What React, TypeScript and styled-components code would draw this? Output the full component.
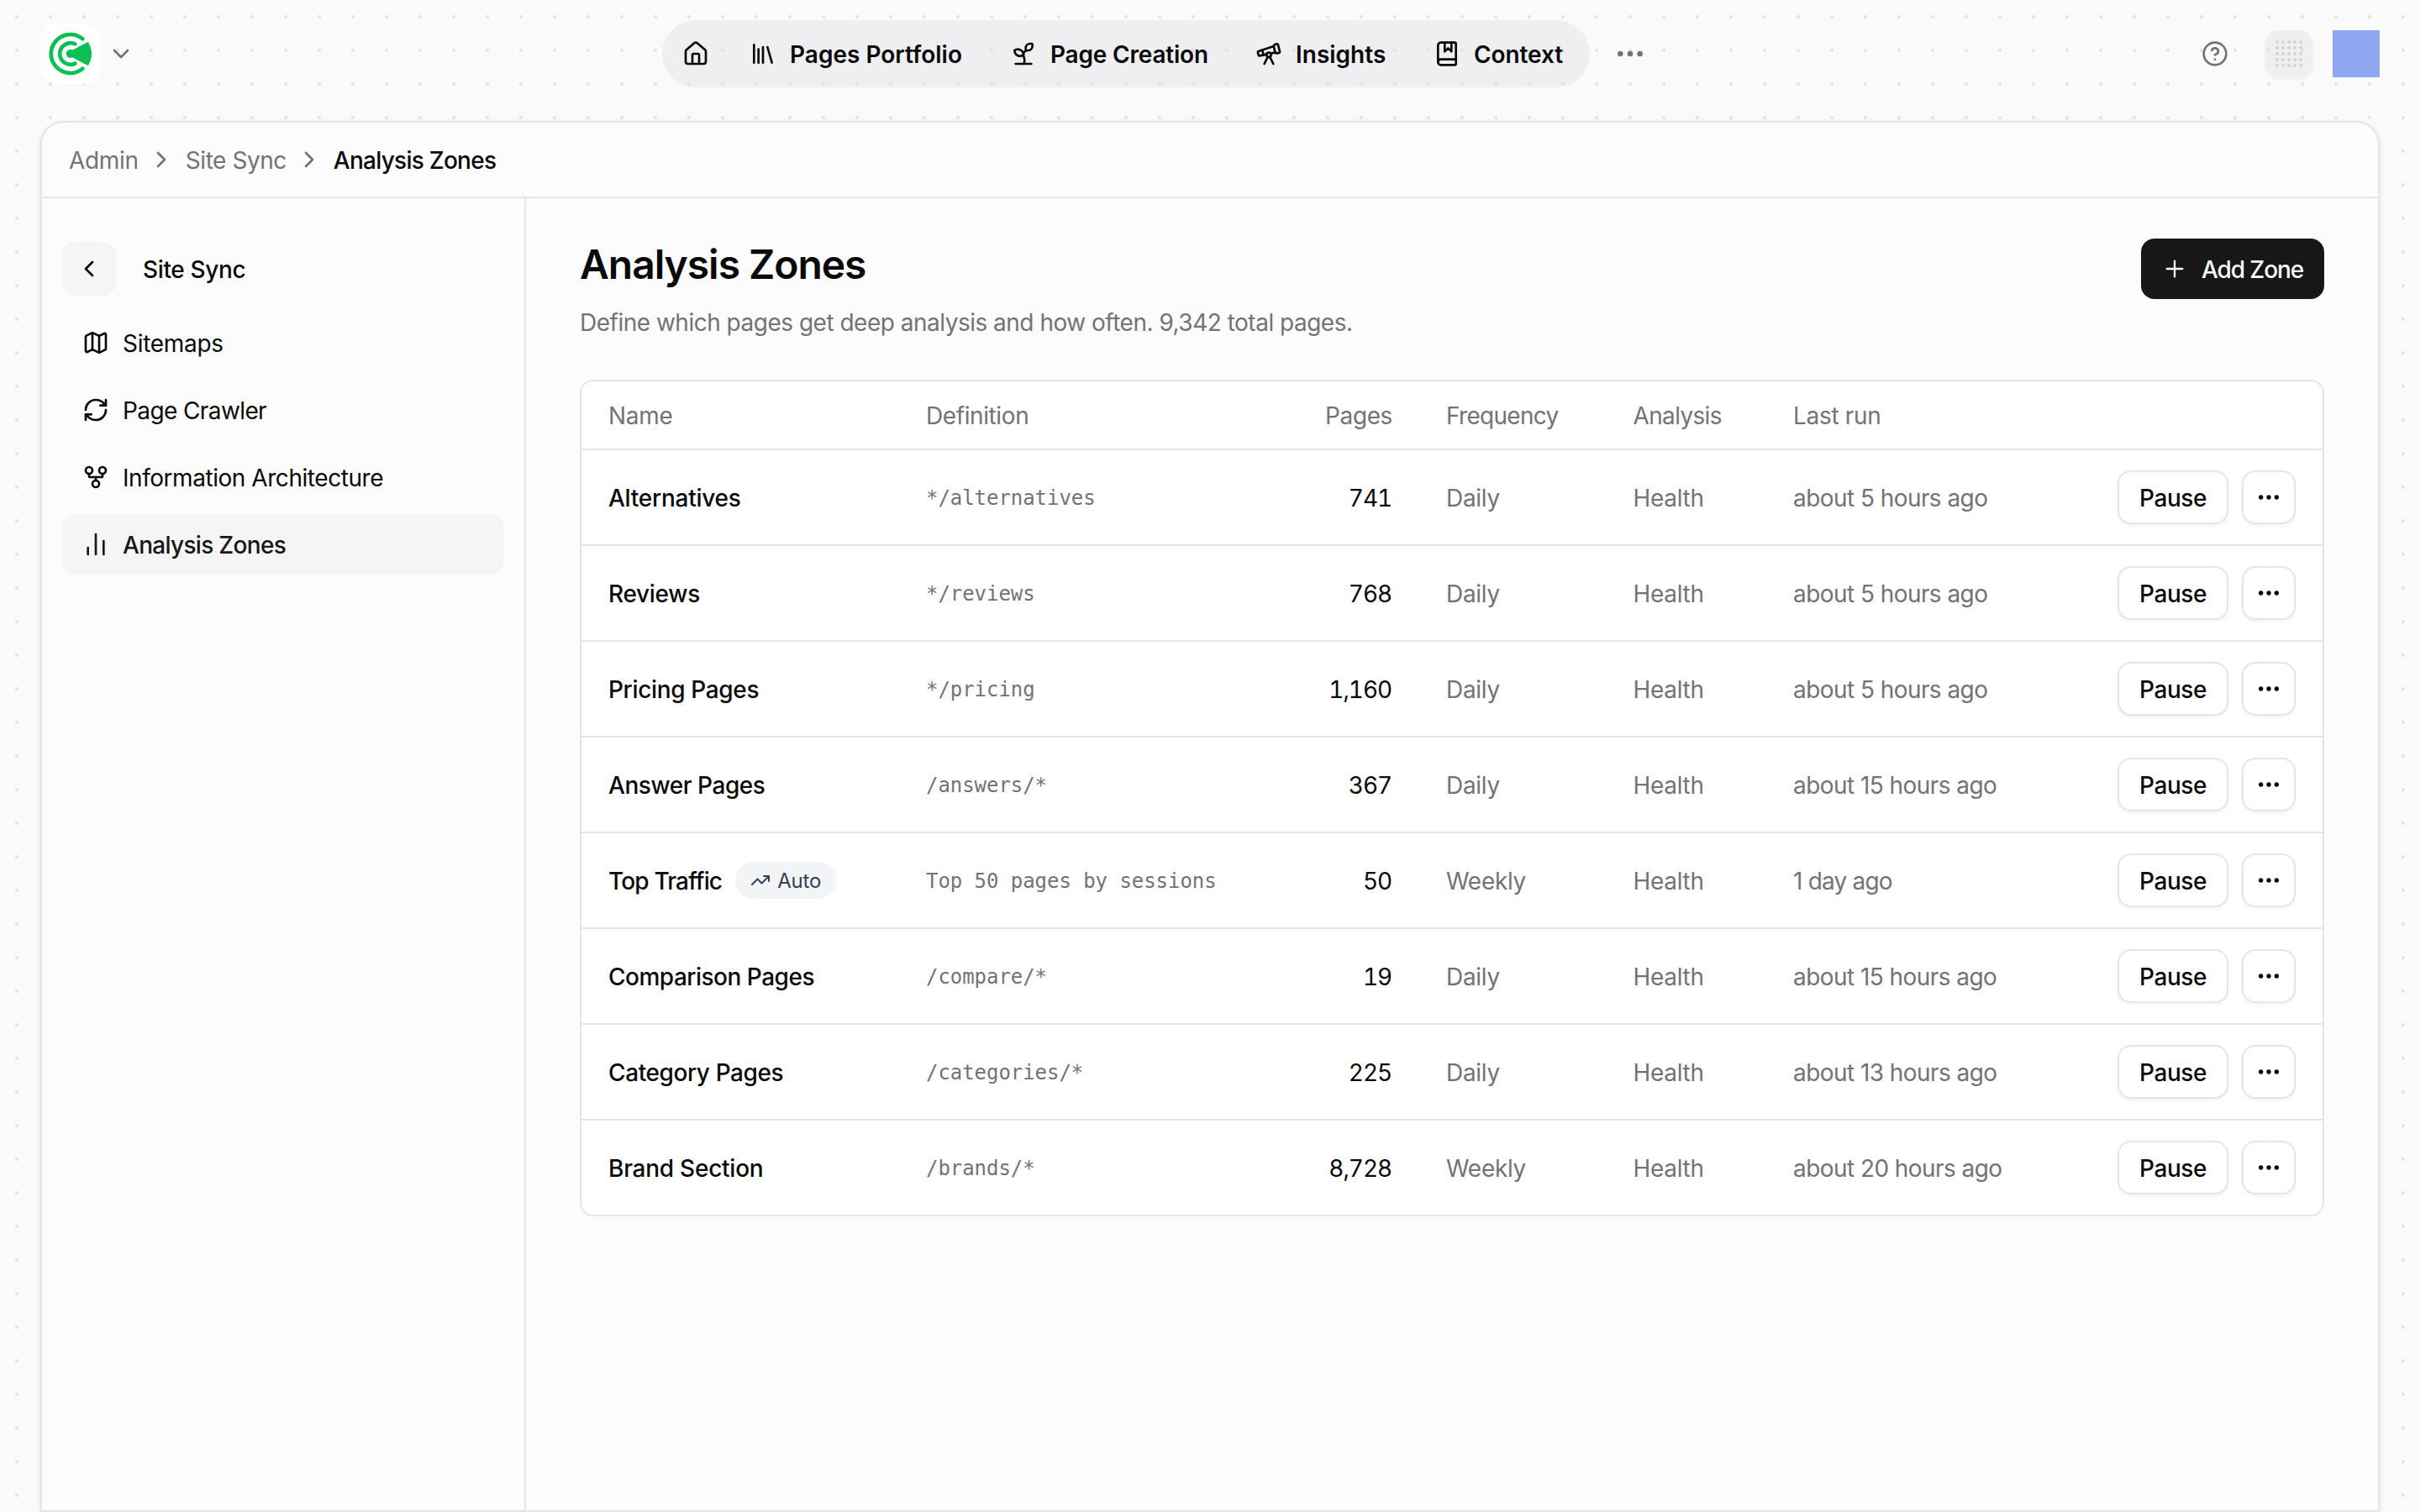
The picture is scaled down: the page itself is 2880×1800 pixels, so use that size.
import React from "react";
import styled, { createGlobalStyle } from "styled-components";
import {
  House, Library, Sprout, Telescope, BookMarked, Ellipsis, CircleQuestionMark, GitFork,
  ChevronDown, ChevronRight, ChevronLeft, Map as MapIcon, RefreshCw, Plus, TrendingUp,
} from "lucide-react";

const sans = `Inter, "Liberation Sans", sans-serif`;
const mono = `"DejaVu Sans Mono", "Liberation Mono", monospace`;

const Global = createGlobalStyle`
  * { box-sizing: border-box; }
  html, body { margin: 0; padding: 0; }
  body { background: #fafafa; font-family: ${sans}; color: #0a0a0a; font-size: 28px; line-height: 40px; overflow: hidden; }
  svg { flex: none; display: block; }
  button { font: inherit; color: inherit; margin: 0; }
  h1, p { margin: 0; }
`;

const Page = styled.div`
  height: 1800px;
  display: flex;
  flex-direction: column;
  background-color: #fafafa;
  background-image: radial-gradient(circle at 20px 20px, #e5e5e5 0 2px, transparent 2.3px);
  background-size: 40px 40px;
`;

const Header = styled.header`
  height: 144px;
  flex: none;
  padding: 0 48px 16px;
  display: grid;
  grid-template-columns: 740px auto 1fr;
  align-items: center;
`;

const Group = styled.div<{ $gap?: number; $end?: boolean }>`
  display: flex;
  align-items: center;
  gap: ${(p) => p.$gap ?? 0}px;
  justify-content: ${(p) => (p.$end ? "flex-end" : "flex-start")};
`;

const LogoTile = styled.div`
  width: 72px;
  height: 72px;
  border-radius: 20px;
  background: #fff;
  display: grid;
  place-items: center;
`;

const NavPill = styled.nav`
  height: 80px;
  width: 1104px;
  border-radius: 40px;
  background: rgba(228, 228, 231, 0.5);
  display: flex;
  align-items: center;
  padding-left: 24px;
`;

const NavItem = styled.a<{ $w: number }>`
  width: ${(p) => p.$w}px;
  display: flex;
  align-items: center;
  gap: 16px;
`;

const Label = styled.span<{ $track?: number; $weight?: number; $dark?: boolean }>`
  display: inline-block;
  padding-top: 1px;
  white-space: nowrap;
  letter-spacing: ${(p) => p.$track ?? 0}px;
  font-weight: ${(p) => p.$weight ?? 400};
  ${(p) => p.$dark && "color: #0a0a0a;"}
`;

const AppTile = styled.div`
  width: 56px;
  height: 56px;
  border-radius: 16px;
  background: rgba(228, 228, 231, 0.5);
  box-shadow: 0 2px 4px rgba(0, 0, 0, 0.05);
  display: grid;
  place-content: center;
  grid-template-columns: repeat(5, 4px);
  gap: 3px;
`;

const TileDot = styled.i`
  width: 4px;
  height: 4px;
  border-radius: 50%;
  background: #d4d4d6;
`;

const Avatar = styled.div`
  width: 56px;
  height: 56px;
  background: #8fa6f0;
`;

const Panel = styled.main`
  flex: 1;
  margin: 0 48px 0;
  border: 2px solid #e5e5e5;
  border-radius: 28px 28px 0 0;
  background: #fcfcfc;
  box-shadow: 0 2px 6px rgba(0, 0, 0, 0.1);
  display: flex;
  flex-direction: column;
`;

const Crumbs = styled.div`
  height: 90px;
  flex: none;
  border-bottom: 2px solid #e5e5e5;
  padding-left: 32px;
  display: flex;
  align-items: center;
  color: #737373;
`;

const CrumbSep = styled.span`
  width: 56px;
  padding-right: 2px;
  display: grid;
  place-items: center;
`;

const Body = styled.div`
  flex: 1;
  display: flex;
`;

const Sidebar = styled.aside`
  width: 576px;
  border-right: 2px solid #e5e5e5;
  padding: 52px 24px 0;
  display: flex;
  flex-direction: column;
`;

const BackRow = styled.div`
  display: flex;
  align-items: center;
  gap: 32px;
  margin-bottom: 20px;
`;

const BackButton = styled.button`
  width: 64px;
  height: 64px;
  border: 0;
  border-radius: 16px;
  background: #f5f5f5;
  display: grid;
  place-items: center;
`;

const SideItem = styled.a<{ $active?: boolean }>`
  height: 72px;
  margin-bottom: 8px;
  border-radius: 16px;
  padding-left: 24px;
  display: flex;
  align-items: center;
  gap: 16px;
  background: ${(p) => (p.$active ? "#f5f5f5" : "transparent")};
  color: ${(p) => (p.$active ? "#171717" : "#0a0a0a")};
`;

const Content = styled.section`
  flex: 1;
  padding: 47px 64px 0;
`;

const TitleBar = styled.div`
  display: flex;
  justify-content: space-between;
  height: 169px;
`;

const Title = styled.h1`
  font-size: 48px;
  line-height: 64px;
  font-weight: 600;
  letter-spacing: -1.05px;
`;

const Subtitle = styled.p`
  margin-top: 17px;
  color: #737373;
  letter-spacing: -0.5px;
`;

const AddButton = styled.button`
  width: 218px;
  height: 72px;
  margin-top: 1px;
  border: 0;
  border-radius: 16px;
  background: #171717;
  color: #fafafa;
  display: flex;
  align-items: center;
  padding: 0 0 0 24px;
  gap: 16px;
`;

const Table = styled.div`
  border: 2px solid #e5e5e5;
  border-radius: 16px;
  background: #fff;
  overflow: hidden;
`;

const Row = styled.div<{ $head?: boolean }>`
  height: ${(p) => (p.$head ? 80 : 112)}px;
  box-sizing: content-box;
  border-bottom: 2px solid #e5e5e5;
  padding: 0 32px;
  display: grid;
  grid-template-columns: 378px 428px 127px 64px 222.5px 190.5px 1fr auto;
  align-items: center;
  color: #737373;
  &:last-child { border-bottom: 0; }
`;

const NameCell = styled.div`
  display: flex;
  align-items: center;
`;

const CodeCell = styled.div`
  padding-top: 2px;
  font-family: ${mono};
  font-size: 24px;
  letter-spacing: -0.05px;
  white-space: pre;
`;

const NumCell = styled.div<{ $dark?: boolean }>`
  display: flex;
  justify-content: flex-end;
  padding-right: ${(p) => (p.$dark ? 1 : 0)}px;
  font-variant-numeric: tabular-nums;
  color: ${(p) => (p.$dark ? "#0a0a0a" : "inherit")};
`;

const AutoBadge = styled.span`
  width: 120px;
  height: 44px;
  margin-left: 16px;
  border-radius: 22px;
  background: #f3f4f6;
  color: #364153;
  font-size: 24px;
  line-height: 32px;
  display: flex;
  align-items: center;
  justify-content: center;
  gap: 8px;
`;

const OutlineButton = styled.button<{ $w: number }>`
  width: ${(p) => p.$w}px;
  height: 64px;
  border: 2px solid #e5e5e5;
  border-radius: 16px;
  background: #fff;
  color: #0a0a0a;
  box-shadow: 0 2px 4px rgba(0, 0, 0, 0.05);
  display: grid;
  place-items: center;
  padding: 0;
`;

function Logo() {
  return (
    <svg width="56" height="56" viewBox="0 0 56 56" fill="none" stroke="#0bbf53" strokeLinecap="round">
      <path d="M42.3 10.2A23 23 0 1 0 42.3 45.8" strokeWidth="4.7" />
      <path d="M33.4 16.4A12.8 12.8 0 1 0 33.4 39.6" strokeWidth="4.6" />
      <path d="M29.5 25.2L48.4 15.2A24.6 24.6 0 0 1 48.4 40.8L29.5 30.8Z" fill="#0bbf53" strokeWidth="2" strokeLinejoin="round" />
      <circle cx="27.8" cy="28" r="5" fill="#0bbf53" stroke="none" />
    </svg>
  );
}

function BarsIcon() {
  return (
    <svg width="32" height="32" viewBox="0 0 24 24" fill="none" stroke="currentColor" strokeWidth="2" strokeLinecap="round">
      <path d="M5 21v-6M12 21V3M19 21V9" />
    </svg>
  );
}

const nav = [
  { icon: Library, label: "Pages Portfolio", w: 310, track: 0 },
  { icon: Sprout, label: "Page Creation", w: 292, track: -0.2 },
  { icon: Telescope, label: "Insights", w: 212, track: 0 },
  { icon: BookMarked, label: "Context", w: 180, track: -0.1 },
];

type Zone = {
  name: string;
  track: number;
  def: string;
  pages: string;
  freq: string;
  last: string;
  auto?: boolean;
};

const zones: Zone[] = [
  { name: "Alternatives", track: -0.25, def: "*/alternatives", pages: "741", freq: "Daily", last: "about 5 hours ago" },
  { name: "Reviews", track: -0.3, def: "*/reviews", pages: "768", freq: "Daily", last: "about 5 hours ago" },
  { name: "Pricing Pages", track: -0.35, def: "*/pricing", pages: "1,160", freq: "Daily", last: "about 5 hours ago" },
  { name: "Answer Pages", track: -0.45, def: "/answers/*", pages: "367", freq: "Daily", last: "about 15 hours ago" },
  { name: "Top Traffic", track: -0.85, def: "Top 50 pages by sessions", pages: "50", freq: "Weekly", last: "1 day ago", auto: true },
  { name: "Comparison Pages", track: -0.5, def: "/compare/*", pages: "19", freq: "Daily", last: "about 15 hours ago" },
  { name: "Category Pages", track: -0.4, def: "/categories/*", pages: "225", freq: "Daily", last: "about 13 hours ago" },
  { name: "Brand Section", track: -0.25, def: "/brands/*", pages: "8,728", freq: "Weekly", last: "about 20 hours ago" },
];

export default function App() {
  return (
    <Page>
      <Global />
      <Header>
        <Group $gap={8}>
          <LogoTile><Logo /></LogoTile>
          <ChevronDown size={32} color="#737373" />
        </Group>
        <Group $gap={28}>
          <NavPill>
            <NavItem $w={80}><House size={32} /></NavItem>
            {nav.map(({ icon: Icon, label, w, track }) => (
              <NavItem key={label} $w={w}>
                <Icon size={32} />
                <Label $weight={600} $track={track}>{label}</Label>
              </NavItem>
            ))}
          </NavPill>
          <Ellipsis size={40} color="#737373" />
        </Group>
        <Group $end $gap={24}>
          <Group $gap={44}>
            <CircleQuestionMark size={32} color="#737373" />
            <AppTile>
              {Array.from({ length: 25 }, (_, i) => <TileDot key={i} />)}
            </AppTile>
          </Group>
          <Avatar />
        </Group>
      </Header>
      <Panel>
        <Crumbs>
          <Label $track={-0.3}>Admin</Label>
          <CrumbSep><ChevronRight size={32} /></CrumbSep>
          <Label $track={-0.45}>Site Sync</Label>
          <CrumbSep><ChevronRight size={32} /></CrumbSep>
          <Label $track={-0.75} $weight={500} $dark>Analysis Zones</Label>
        </Crumbs>
        <Body>
          <Sidebar>
            <BackRow>
              <BackButton><ChevronLeft size={32} /></BackButton>
              <Label $weight={500} $track={-0.35}>Site Sync</Label>
            </BackRow>
            <SideItem><MapIcon size={32} /><Label $track={-0.3}>Sitemaps</Label></SideItem>
            <SideItem><RefreshCw size={32} /><Label $track={-0.6}>Page Crawler</Label></SideItem>
            <SideItem><GitFork size={32} /><Label $track={-0.45}>Information Architecture</Label></SideItem>
            <SideItem $active><BarsIcon /><Label $weight={500} $track={-0.7}>Analysis Zones</Label></SideItem>
          </Sidebar>
          <Content>
            <TitleBar>
              <div>
                <Title>Analysis Zones</Title>
                <Subtitle>Define which pages get deep analysis and how often. 9,342 total pages.</Subtitle>
              </div>
              <AddButton><Plus size={32} strokeWidth={1.75} /><Label $weight={500} $track={-1.1}>Add Zone</Label></AddButton>
            </TitleBar>
            <Table>
              <Row $head>
                <Label $track={-0.3}>Name</Label>
                <Label $track={-0.4}>Definition</Label>
                <NumCell><Label $track={-0.4}>Pages</Label></NumCell>
                <span />
                <Label $track={-0.7}>Frequency</Label>
                <Label $track={-0.65}>Analysis</Label>
                <Label $track={-0.3}>Last run</Label>
              </Row>
              {zones.map((z) => (
                <Row key={z.name}>
                  <NameCell>
                    <Label $weight={500} $track={z.track} $dark>{z.name}</Label>
                    {z.auto && (
                      <AutoBadge><TrendingUp size={24} /><Label $track={-0.2}>Auto</Label></AutoBadge>
                    )}
                  </NameCell>
                  <CodeCell>{z.def}</CodeCell>
                  <NumCell $dark><Label $track={-1.1}>{z.pages}</Label></NumCell>
                  <span />
                  <Label $track={-0.3}>{z.freq}</Label>
                  <Label $track={-0.3}>Health</Label>
                  <Label $track={z.auto ? -0.8 : -0.56}>{z.last}</Label>
                  <Group $gap={16}>
                    <OutlineButton $w={132}><Label $weight={500} $track={-0.4}>Pause</Label></OutlineButton>
                    <OutlineButton $w={64}><Ellipsis size={32} /></OutlineButton>
                  </Group>
                </Row>
              ))}
            </Table>
          </Content>
        </Body>
      </Panel>
    </Page>
  );
}
